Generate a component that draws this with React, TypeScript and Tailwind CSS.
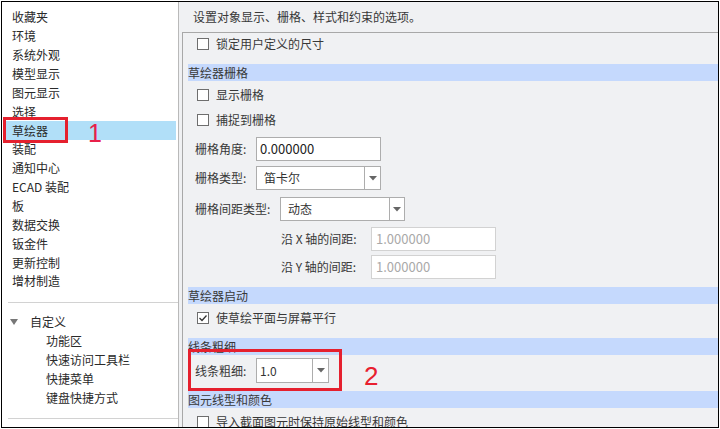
import React from "react";

const FONT = { fontFamily: '"Noto Sans CJK SC", "Noto Sans", sans-serif' };

function Cb({ checked = false }: { checked?: boolean }) {
  return (
    <span className="w-[12px] h-[12px] border border-[#6e6e6e] bg-white flex items-center justify-center shrink-0">
      {checked && (
        <svg width="10" height="10" viewBox="0 0 10 10">
          <path d="M1.5 5 L4 7.5 L8.5 2.5" fill="none" stroke="#333" strokeWidth="1.3" />
        </svg>
      )}
    </span>
  );
}

function CbRow({ label, checked = false, mt }: { label: string; checked?: boolean; mt: string }) {
  return (
    <div className={`flex items-center h-[22px] pl-[14px] shrink-0 ${mt}`}>
      <Cb checked={checked} />
      <span className="ml-[7px] text-[12px] text-[#383838]">{label}</span>
    </div>
  );
}

function Band({ label, mt }: { label: string; mt: string }) {
  return (
    <div className={`ml-[5px] h-[17px] shrink-0 bg-[#c5d9fd] flex items-center text-[12px] text-[#383838] ${mt}`}>
      {label}
    </div>
  );
}

function Arrow() {
  return (
    <svg width="8" height="5" viewBox="0 0 8 5">
      <path d="M0 0 L8 0 L4 4.5 Z" fill="#666" />
    </svg>
  );
}

function Select({ value, w, btn, pl }: { value: string; w: string; btn: string; pl: string }) {
  return (
    <div className={`${w} h-full bg-white border border-[#adadad] flex`}>
      <div className={`flex-1 flex items-center ${pl} text-[12px] text-[#333]`}>{value}</div>
      <div className={`${btn} border-l border-[#adadad] flex items-center justify-center`}>
        <Arrow />
      </div>
    </div>
  );
}

const leftItems = [
  "收藏夹",
  "环境",
  "系统外观",
  "模型显示",
  "图元显示",
  "选择",
  "草绘器",
  "装配",
  "通知中心",
  "ECAD 装配",
  "板",
  "数据交换",
  "钣金件",
  "更新控制",
  "增材制造",
];

export default function App() {
  return (
    <div className="w-[720px] h-[429px] bg-white overflow-hidden pt-[1px] pl-[1px]" style={FONT}>
      <div className="w-[718px] h-[427px] border border-black flex overflow-hidden">
        {/* Left panel */}
        <div className="relative w-[177px] h-full bg-white border-r border-[#b9b9b9] flex flex-col pt-[6px]">
          {leftItems.map((t) => (
            <div
              key={t}
              className={`h-[18.86px] mx-[2px] pl-[8px] flex items-center text-[12px] text-[#2a2a2a] ${
                t === "草绘器" ? "bg-[#b1dff8]" : ""
              }`}
            >
              {t}
            </div>
          ))}
          <div className="ml-[6px] mt-[11px] h-px bg-[#d2d2d2]" />
          <div className="mt-[10px] h-[19px] flex items-center pl-[8px] text-[12px] text-[#2a2a2a]">
            <svg width="8" height="6" viewBox="0 0 8 6" className="mr-[12px]">
              <path d="M0 0 L8 0 L4 6 Z" fill="#777" />
            </svg>
            自定义
          </div>
          {["功能区", "快速访问工具栏", "快捷菜单", "键盘快捷方式"].map((t) => (
            <div key={t} className="h-[19px] flex items-center pl-[44px] text-[12px] text-[#2a2a2a]">
              {t}
            </div>
          ))}
          <div className="ml-[6px] mt-[10px] h-px bg-[#d2d2d2]" />

          {/* annotation 1 */}
          <div className="absolute left-[1px] top-[115px] w-[65px] h-[26px] border-[3px] border-[#e5202e]" />
          <div
            className="absolute left-[86px] top-[119px] text-[25px] leading-none text-[#e8204a]"
            style={{ fontFamily: '"Liberation Sans", sans-serif' }}
          >
            1
          </div>
        </div>

        {/* Right side */}
        <div className="flex-1 h-full bg-[#f0f1f3] flex flex-col">
          <div className="h-[30px] shrink-0 flex items-center pl-[14px] text-[12px] text-[#383838]">
            设置对象显示、栅格、样式和约束的选项。
          </div>
          <div className="relative flex-1 ml-[3px] border-l border-t border-[#a8a8a8] flex flex-col overflow-hidden">
            <CbRow label="锁定用户定义的尺寸" mt="mt-0" />
            <Band label="草绘器栅格" mt="mt-[9px]" />
            <CbRow label="显示栅格" mt="mt-[3px]" />
            <CbRow label="捕捉到栅格" mt="mt-[3px]" />

            <div className="mt-[6px] h-[24px] shrink-0 flex items-center pl-[12px]">
              <span className="w-[61px] text-[12px] text-[#383838]">栅格角度:</span>
              <div className="w-[125px] h-full bg-white border border-[#adadad] flex items-center pl-[3px] text-[13px] text-[#222]">
                0.000000
              </div>
            </div>
            <div className="mt-[5px] h-[24px] shrink-0 flex items-center pl-[12px]">
              <span className="w-[61px] text-[12px] text-[#383838]">栅格类型:</span>
              <Select value="笛卡尔" w="w-[125px]" btn="w-[16px]" pl="pl-[7px]" />
            </div>
            <div className="mt-[7px] h-[24px] shrink-0 flex items-center pl-[12px]">
              <span className="w-[85px] text-[12px] text-[#383838]">栅格间距类型:</span>
              <Select value="动态" w="w-[125px]" btn="w-[15px]" pl="pl-[7px]" />
            </div>
            <div className="mt-[6px] h-[24px] shrink-0 flex items-center pl-[98px]">
              <span className="w-[90px] text-[12px] text-[#383838]">沿 X 轴的间距:</span>
              <div className="w-[125px] h-full bg-white border border-[#d2d2d2] flex items-center pl-[4px] text-[13px] text-[#a9a9a9]">
                1.000000
              </div>
            </div>
            <div className="mt-[4px] h-[24px] shrink-0 flex items-center pl-[98px]">
              <span className="w-[90px] text-[12px] text-[#383838]">沿 Y 轴的间距:</span>
              <div className="w-[125px] h-full bg-white border border-[#d2d2d2] flex items-center pl-[4px] text-[13px] text-[#a9a9a9]">
                1.000000
              </div>
            </div>

            <Band label="草绘器启动" mt="mt-[8px]" />
            <CbRow label="使草绘平面与屏幕平行" checked mt="mt-[3px]" />
            <Band label="线条粗细" mt="mt-[9px]" />
            <div className="mt-[3px] h-[25px] shrink-0 flex items-center pl-[12px]">
              <span className="w-[61px] text-[12px] text-[#383838]">线条粗细:</span>
              <Select value="1.0" w="w-[73px]" btn="w-[16px]" pl="pl-[3px]" />
            </div>
            <Band label="图元线型和颜色" mt="mt-[8px]" />
            <CbRow label="导入截面图元时保持原始线型和颜色" mt="mt-[3px]" />

            {/* annotation 2 */}
            <div className="absolute left-[5px] top-[316px] w-[154px] h-[42px] border-[3px] border-[#e5202e]" />
            <div
              className="absolute left-[181px] top-[330px] text-[26px] leading-none text-[#e8202f]"
              style={{ fontFamily: '"Liberation Sans", sans-serif' }}
            >
              2
            </div>
          </div>
        </div>
      </div>
    </div>
  );
}
